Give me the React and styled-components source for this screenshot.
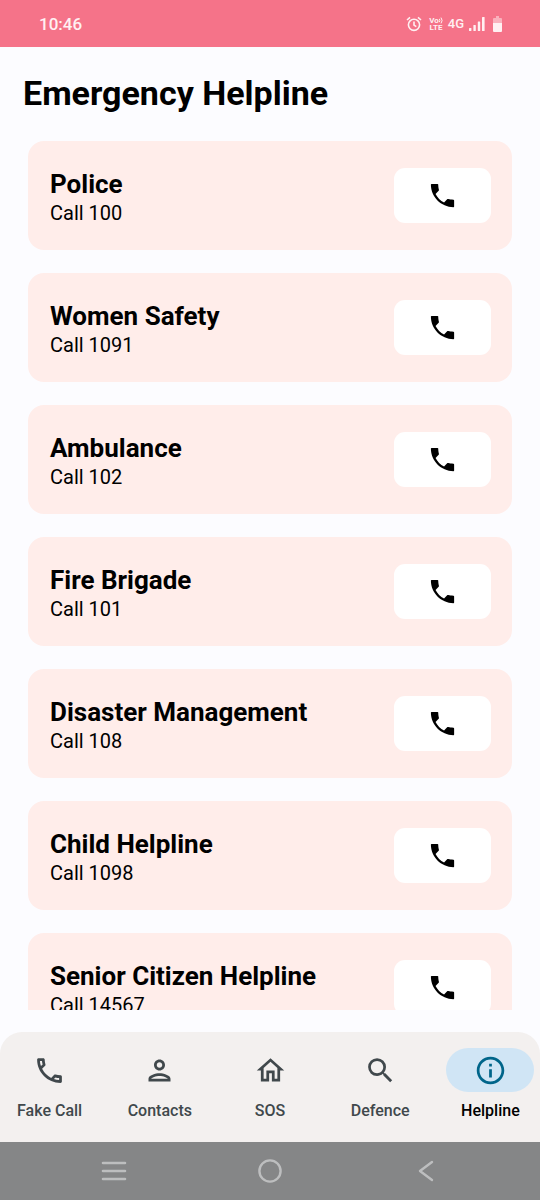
import React from "react";
import styled, { createGlobalStyle } from "styled-components";
import {
  MdOutlineCall,
  MdOutlinePerson,
  MdOutlineHome,
  MdSearch,
  MdOutlineInfo,
} from "react-icons/md";

const GlobalStyle = createGlobalStyle`
  *, *::before, *::after { box-sizing: border-box; }
  body {
    margin: 0;
    background: #fcfcff;
    color: #000;
    font-family: Roboto, "Liberation Sans", sans-serif;
  }
  button { font: inherit; border: 0; padding: 0; background: none; cursor: pointer; }
`;

const Screen = styled.div`
  display: flex;
  flex-direction: column;
  height: 100vh;
`;

const StatusBar = styled.header`
  display: flex;
  flex: none;
  align-items: center;
  justify-content: space-between;
  height: 47px;
  padding: 0 38px 0 39px;
  background: #f57389;
  color: #fff0f2;
`;

const Clock = styled.time`
  font-size: 17px;
  font-weight: 500;
  line-height: 20px;
`;

const StatusIcons = styled.div`
  display: flex;
  align-items: center;
  gap: 5px;
  svg { display: block; }
`;

const Volte = styled.span`
  display: flex;
  flex-direction: column;
  align-items: center;
  padding-left: 2px;
  font-size: 8px;
  font-weight: 700;
  line-height: 7px;
`;

const VolteTop = styled.span`
  display: flex;
  align-items: center;
`;

const Network = styled.span`
  font-size: 13px;
  font-weight: 500;
  line-height: 20px;
`;

const Content = styled.main`
  flex: 1;
  min-height: 0;
  margin-bottom: 22px;
  overflow: hidden;
`;

const Title = styled.h1`
  margin: 0;
  padding: 26px 23px 28px;
  font-size: 34px;
  font-weight: 700;
  line-height: 40px;
`;

const HelplineList = styled.ul`
  display: flex;
  flex-direction: column;
  gap: 23px;
  margin: 0;
  padding: 0 28px;
  list-style: none;
`;

const Card = styled.li`
  display: flex;
  align-items: flex-start;
  justify-content: space-between;
  height: 109px;
  padding: 27px 21px 0 22px;
  border-radius: 16px;
  background: #ffedea;
`;

const Name = styled.h2`
  margin: 0;
  font-size: 26px;
  font-weight: 700;
  line-height: 32px;
`;

const Number = styled.p`
  margin: 0;
  font-size: 20px;
  line-height: 26px;
`;

const CallButton = styled.button`
  display: flex;
  align-items: center;
  justify-content: center;
  width: 97px;
  height: 55px;
  border-radius: 11px;
  background: #fff;
  color: #000;
`;

const BottomNav = styled.nav`
  display: flex;
  flex: none;
  gap: 11px;
  height: 110px;
  padding-top: 16px;
  border-radius: 22px 22px 0 0;
  background: #f3f0ef;
`;

const NavItem = styled.button`
  display: flex;
  flex: 1 1 0;
  flex-direction: column;
  align-items: center;
  gap: 8px;
  min-width: 0;
  color: ${(p) => (p.$active ? "#000" : "#40484c")};
`;

const Pill = styled.span`
  display: flex;
  align-items: center;
  justify-content: center;
  width: 88px;
  height: 44px;
  border-radius: 22px;
  background: ${(p) => (p.$active ? "#d0e5f5" : "transparent")};
  color: ${(p) => (p.$active ? "#00658a" : "#40484c")};
`;

const NavLabel = styled.span`
  font-size: 16px;
  font-weight: 500;
  line-height: 21px;
  white-space: nowrap;
`;

const SystemBar = styled.footer`
  display: flex;
  flex: none;
  height: 58px;
  padding: 0 36px;
  background: #858687;
`;

const SystemButton = styled.button`
  display: flex;
  flex: 1;
  align-items: center;
  justify-content: center;
  color: #bdbebf;
`;

const helplines = [
  ["Police", "100"],
  ["Women Safety", "1091"],
  ["Ambulance", "102"],
  ["Fire Brigade", "101"],
  ["Disaster Management", "108"],
  ["Child Helpline", "1098"],
  ["Senior Citizen Helpline", "14567"],
];

const tabs = [
  { label: "Fake Call", Icon: MdOutlineCall },
  { label: "Contacts", Icon: MdOutlinePerson },
  { label: "SOS", Icon: MdOutlineHome },
  { label: "Defence", Icon: MdSearch },
  { label: "Helpline", Icon: MdOutlineInfo, active: true },
];

const PhoneIcon = () => (
  <svg width="31" height="31" viewBox="0 0 24 24" fill="currentColor" aria-hidden="true">
    <path d="M6.62 10.79c1.44 2.83 3.76 5.14 6.59 6.59l2.4-2.4c.27-.27.57-.3.9-.2 1.1.3 2.3.52 3.99.52.3 0 .5.2.5.5v4.7c0 .3-.2.5-.5.5C10.9 21 3 13.1 3 3.5c0-.3.2-.5.5-.5h4.7c.3 0 .5.2.5.5 0 1.3.22 2.9.52 3.99.1.33.07.63-.2.9z" />
  </svg>
);

const AlarmIcon = () => (
  <svg width="16" height="16" viewBox="0 0 16 16" fill="none" stroke="currentColor" strokeWidth="1.6" aria-hidden="true">
    <circle cx="8" cy="8.8" r="5.6" />
    <path d="M8 5.6v3.5l2.3 1.5M1 4l3-2.6M15 4l-3-2.6" />
  </svg>
);

const WavesIcon = () => (
  <svg width="4" height="7" viewBox="0 0 4 7" fill="none" stroke="currentColor" strokeWidth="1" aria-hidden="true">
    <path d="M0.3 1.8q1.2 1.7 0 3.4M2 0.6q2.2 2.9 0 5.8" />
  </svg>
);

const SignalIcon = () => (
  <svg width="16" height="16" viewBox="0 0 16 16" fill="currentColor" aria-hidden="true">
    <rect x="0" y="12" width="2.4" height="3" rx="0.6" />
    <rect x="4.4" y="9" width="2.4" height="6" rx="0.6" />
    <rect x="8.8" y="5.5" width="2.4" height="9.5" rx="0.6" />
    <rect x="13" y="1" width="2.6" height="14" rx="0.6" />
  </svg>
);

const BatteryIcon = () => (
  <svg width="12" height="18" viewBox="0 0 12 18" fill="currentColor" aria-hidden="true">
    <path opacity="0.5" d="M6 1h3v2h2a1 1 0 0 1 1 1v4H3V4a1 1 0 0 1 1-1h2z" />
    <path d="M3 8h9v8a1 1 0 0 1-1 1H4a1 1 0 0 1-1-1z" />
  </svg>
);

const RecentsIcon = () => (
  <svg width="26" height="22" viewBox="0 0 26 22" stroke="currentColor" strokeWidth="2.6" strokeLinecap="round" aria-hidden="true">
    <path d="M2 3h22M2 11h22M2 19h22" />
  </svg>
);

const HomeIcon = () => (
  <svg width="26" height="26" viewBox="0 0 26 26" fill="none" stroke="currentColor" strokeWidth="2.4" aria-hidden="true">
    <circle cx="13" cy="13" r="10.6" />
  </svg>
);

const BackIcon = () => (
  <svg width="16" height="22" viewBox="0 0 16 22" fill="none" stroke="currentColor" strokeWidth="2.4" strokeLinecap="round" strokeLinejoin="round" aria-hidden="true">
    <path d="M14 2L2 11l12 9" />
  </svg>
);

export default function App() {
  return (
    <>
      <GlobalStyle />
      <Screen>
        <StatusBar>
          <Clock>10:46</Clock>
          <StatusIcons>
            <AlarmIcon />
            <Volte>
              <VolteTop>
                Vo
                <WavesIcon />
              </VolteTop>
              <span>LTE</span>
            </Volte>
            <Network>4G</Network>
            <SignalIcon />
            <BatteryIcon />
          </StatusIcons>
        </StatusBar>
        <Content>
          <Title>Emergency Helpline</Title>
          <HelplineList>
            {helplines.map(([name, number]) => (
              <Card key={name}>
                <div>
                  <Name>{name}</Name>
                  <Number>Call {number}</Number>
                </div>
                <CallButton type="button" aria-label={`Call ${name}`}>
                  <PhoneIcon />
                </CallButton>
              </Card>
            ))}
          </HelplineList>
        </Content>
        <BottomNav>
          {tabs.map(({ label, Icon, active }) => (
            <NavItem key={label} type="button" $active={active} aria-current={active ? "page" : undefined}>
              <Pill $active={active}>
                <Icon size={33} />
              </Pill>
              <NavLabel>{label}</NavLabel>
            </NavItem>
          ))}
        </BottomNav>
        <SystemBar>
          <SystemButton type="button" aria-label="Recent apps"><RecentsIcon /></SystemButton>
          <SystemButton type="button" aria-label="Home"><HomeIcon /></SystemButton>
          <SystemButton type="button" aria-label="Back"><BackIcon /></SystemButton>
        </SystemBar>
      </Screen>
    </>
  );
}
